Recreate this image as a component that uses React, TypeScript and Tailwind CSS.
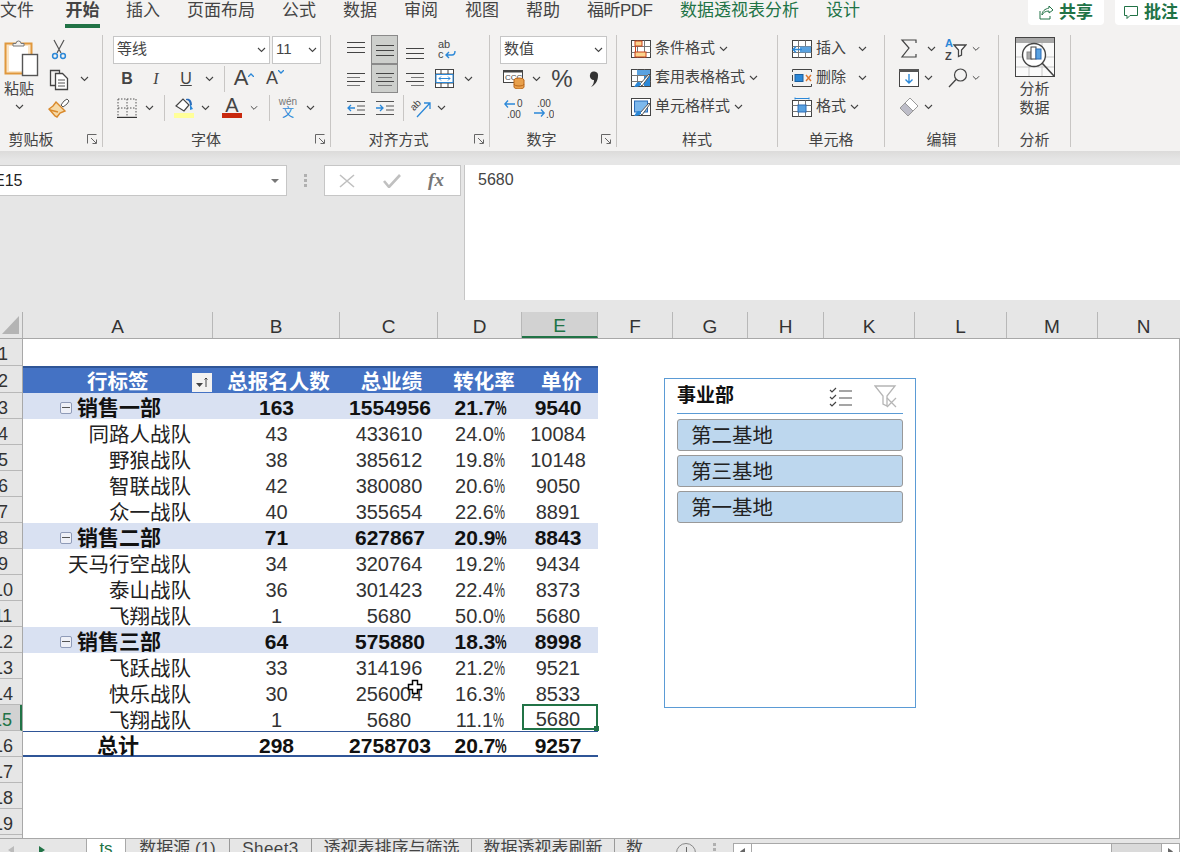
import React from "react";

const Chev = ({ c = "#444" }: { c?: string }) => (
  <svg width="9" height="6" viewBox="0 0 9 6"><path d="M1 1l3.5 3.5L8 1" stroke={c} strokeWidth="1.1" fill="none" /></svg>
);
const Slot = ({ className = "", children }: { className?: string; children?: React.ReactNode }) => (
  <div className={`flex h-full shrink-0 items-center justify-center ${className}`}>{children}</div>
);
const Row = ({ children, className = "" }: { children?: React.ReactNode; className?: string }) => (
  <div className={`flex h-[29px] items-center ${className}`}>{children}</div>
);
const VLine = () => <div className="h-[26px] w-px bg-[#c8c6c4]" />;
const Launcher = () => (
  <svg width="10" height="10" viewBox="0 0 10 10" className="mr-[5px] mt-[1px]">
    <path d="M.5 9.5v-9h9M4 4l5 5M5.5 9.5h4v-4" stroke="#666" fill="none" />
  </svg>
);
const Group = ({ className, label, labelClass = "", launcher, children }: { className: string; label: string; labelClass?: string; launcher?: boolean; children?: React.ReactNode }) => (
  <div className={`flex h-[112px] shrink-0 flex-col border-r border-[#c8c6c4] ${className}`}>
    <div className="h-[95px]">{children}</div>
    <div className="flex h-[17px] items-center">
      <div className={`flex-1 pt-[2px] text-center text-[15px] leading-[17px] text-[#444] ${labelClass}`}>{label}</div>
      {launcher && <Launcher />}
    </div>
  </div>
);

const Lines = ({ ys, c = "#444" }: { ys: number[]; c?: string }) => (
  <svg width="20" height="26" viewBox="0 0 20 26">
    {ys.map((y, i) => <path key={i} d={`M1 ${y + 0.5}H19`} stroke={c} strokeWidth="1" />)}
  </svg>
);
const AlignH = ({ t }: { t: "l" | "c" | "r" }) => {
  const d = t === "l" ? ["M1 7.5H19", "M1 11.5H14", "M1 15.5H19", "M1 19.5H14"] : t === "c" ? ["M1 7.5H19", "M3 11.5H17", "M1 15.5H19", "M3 19.5H17"] : ["M1 7.5H19", "M6 11.5H19", "M1 15.5H19", "M6 19.5H19"];
  return <svg width="20" height="26" viewBox="0 0 20 26">{d.map((p, i) => <path key={i} d={p} stroke={i % 2 ? "#777" : "#444"} />)}</svg>;
};

const Paste = () => (
  <svg width="36" height="38" viewBox="0 0 36 38">
    <rect x="1.5" y="4.5" width="26" height="30" fill="#fbe5c6" stroke="#e0983d" strokeWidth="2" />
    <rect x="5" y="7" width="19" height="25" fill="#fff" />
    <path d="M9 7V4.5h3a2.5 2.5 0 0 1 5 0h3V7z" fill="#f3f2f1" stroke="#777" />
    <rect x="18.5" y="15.5" width="15" height="21" fill="#fff" stroke="#555" strokeWidth="1.4" />
  </svg>
);
const Scissors = () => (
  <svg width="16" height="22" viewBox="0 0 16 22">
    <path d="M3 1l7 13M13 1L6 14" stroke="#555" strokeWidth="1.2" fill="none" />
    <circle cx="4" cy="17" r="2.4" fill="none" stroke="#2b88d8" strokeWidth="1.5" />
    <circle cx="12" cy="17" r="2.4" fill="none" stroke="#2b88d8" strokeWidth="1.5" />
  </svg>
);
const Copy = () => (
  <svg width="22" height="24" viewBox="0 0 22 24">
    <path d="M7.5 18.5h-5v-15h9v3" fill="none" stroke="#444" strokeWidth="1.3" />
    <path d="M7.5 6.5h7l5 5v11h-12z" fill="#fff" stroke="#444" strokeWidth="1.3" />
    <path d="M10 13h7M10 16h7M10 19h7" stroke="#555" />
  </svg>
);
const Painter = () => (
  <svg width="22" height="22" viewBox="0 0 22 22">
    <path d="M13 8l3-4 3-2 2 2-2 3-4 3z" fill="#fff" stroke="#555" />
    <path d="M8 5l9 9-5 2-3 4-2-1-6-7 4-3z" fill="#f6d9a6" stroke="#d9892b" strokeWidth="1.4" />
    <path d="M2 13l8 2" stroke="#d9892b" strokeWidth="1.6" />
  </svg>
);
const Borders = () => (
  <svg width="20" height="20" viewBox="0 0 20 20">
    <path d="M1 1h18v18M1 1v18M10 1v18M1 10h18" stroke="#555" strokeDasharray="1.5 1.5" fill="none" />
    <path d="M0 19.5h20" stroke="#333" strokeWidth="1.4" />
  </svg>
);
const Fill = () => (
  <div className="flex flex-col items-center">
    <svg width="20" height="15" viewBox="0 0 20 15">
      <path d="M2 8l7-7 6 6-5 6z" fill="#fff" stroke="#444" strokeWidth="1.2" />
      <path d="M12 2c3 0 4 3 4 6l2-1c0-4-2-7-6-6z" fill="#2b6cb8" />
      <path d="M16 6l3 5 -3 1z" fill="#2b88d8" />
    </svg>
    <div className="h-[5px] w-[20px] bg-[#ffff99]" />
  </div>
);
const FontA = () => (
  <div className="flex flex-col items-center">
    <div className="h-[15px] text-[20px] leading-[15px] text-[#444]">A</div>
    <div className="h-[5px] w-[20px] bg-[#c8290e]" />
  </div>
);
const Wrap = () => (
  <svg width="20" height="22" viewBox="0 0 20 22">
    <text x="1" y="9" fontSize="11" fill="#444" fontFamily="Liberation Sans">ab</text>
    <text x="1" y="19" fontSize="11" fill="#444" fontFamily="Liberation Sans">c</text>
    <path d="M18 12c0 3-1 4-3 4H9m3-3l-3 3 3 3" stroke="#2b88d8" strokeWidth="1.4" fill="none" />
  </svg>
);
const Merge = () => (
  <svg width="20" height="20" viewBox="0 0 20 20">
    <rect x=".5" y=".5" width="18" height="18" fill="#fff" stroke="#444" />
    <path d="M.5 5h18M.5 14h18M6 .5V5M13 .5V5M6 14v5M13 14v5" stroke="#444" />
    <rect x="1" y="5.5" width="17" height="8" fill="#fff" stroke="#2b88d8" />
    <path d="M4 9.5h11M6 7.5l-2 2 2 2M13 7.5l2 2-2 2" stroke="#2b88d8" fill="none" />
  </svg>
);
const IndentL = () => (
  <svg width="20" height="18" viewBox="0 0 20 18">
    <path d="M1 2.5h18M11 7h8M11 11h8M1 15.5h18" stroke="#555" />
    <path d="M9 9H2m3-3L2 9l3 3" stroke="#2b88d8" strokeWidth="1.3" fill="none" />
  </svg>
);
const IndentR = () => (
  <svg width="20" height="18" viewBox="0 0 20 18">
    <path d="M1 2.5h18M11 7h8M11 11h8M1 15.5h18" stroke="#555" />
    <path d="M1 9h7M5 6l3 3-3 3" stroke="#2b88d8" strokeWidth="1.3" fill="none" />
  </svg>
);
const Orient = () => (
  <svg width="22" height="22" viewBox="0 0 22 22">
    <text x="0" y="11" fontSize="10" fill="#444" fontFamily="Liberation Sans" transform="rotate(-45 6 8)">ab</text>
    <path d="M7 20L20 6M14 6h6v6" stroke="#2b88d8" strokeWidth="1.3" fill="none" />
  </svg>
);
const Account = () => (
  <svg width="22" height="20" viewBox="0 0 22 20">
    <rect x=".5" y="1.5" width="19" height="12" fill="#fff" stroke="#444" />
    <path d="M.5 2.5h19" stroke="#444" strokeWidth="2" />
    <text x="2" y="11" fontSize="8" fill="#444" fontFamily="Liberation Sans">CCC</text>
    <ellipse cx="16" cy="11" rx="5" ry="2" fill="#e8a04c" stroke="#b9661a" />
    <path d="M11 11v7c0 1 2 2 5 2s5-1 5-2v-7" fill="#e8a04c" stroke="#b9661a" />
    <path d="M11 15c0 1 2 2 5 2s5-1 5-2" fill="none" stroke="#b9661a" />
  </svg>
);
const DecInc = () => (
  <svg width="20" height="20" viewBox="0 0 20 20">
    <path d="M11 6H1m3-3.5L.8 6 4 9.5" stroke="#2b88d8" strokeWidth="1.3" fill="none" />
    <text x="13" y="9" fontSize="10" fill="#444" fontFamily="Liberation Sans">0</text>
    <text x="3" y="20" fontSize="10" fill="#444" fontFamily="Liberation Sans">.00</text>
  </svg>
);
const DecDec = () => (
  <svg width="20" height="20" viewBox="0 0 20 20">
    <text x="3" y="9" fontSize="10" fill="#444" fontFamily="Liberation Sans">.00</text>
    <path d="M0 15h10M7 11.5l3.2 3.5L7 18.5" stroke="#2b88d8" strokeWidth="1.3" fill="none" />
    <text x="12" y="20" fontSize="10" fill="#444" fontFamily="Liberation Sans">.0</text>
  </svg>
);
const GridBase = () => (
  <>
    <rect x=".5" y=".5" width="19" height="17" fill="#fff" stroke="#444" />
    <path d="M.5 6.5h19M.5 12.5h19M6.5.5v17M13.5.5v17" stroke="#777" />
  </>
);
const CondF = () => (
  <svg width="20" height="18" viewBox="0 0 20 18">
    <GridBase />
    <rect x="4" y="1" width="7" height="5" fill="#fbd38d" stroke="#c8401a" />
    <rect x="4" y="12" width="11" height="5" fill="#fbd38d" stroke="#c8401a" />
    <path d="M4.5 6v6" stroke="#c8401a" />
  </svg>
);
const Brush = () => (
  <>
    <path d="M9 15L18 5l1 1-8 11z" fill="#fff" stroke="#555" />
    <path d="M5 15c2-3 5-2 5 0s-3 3-7 3c1-1 1-2 2-3z" fill="#2b88d8" />
  </>
);
const TblF = () => (
  <svg width="20" height="18" viewBox="0 0 20 18">
    <GridBase />
    <rect x="6" y="1" width="13" height="5" fill="#5aa2e0" />
    <rect x="13" y="7" width="6" height="10" fill="#2b88d8" />
    <Brush />
  </svg>
);
const CellF = () => (
  <svg width="20" height="18" viewBox="0 0 20 18">
    <rect x=".5" y=".5" width="19" height="17" fill="#fff" stroke="#444" />
    <rect x="3.5" y="3" width="13" height="11" fill="#7db8ec" stroke="#2b6cb8" />
    <Brush />
  </svg>
);
const InsC = () => (
  <svg width="20" height="18" viewBox="0 0 20 18">
    <GridBase />
    <rect x="8" y="6.5" width="11" height="6" fill="#5aa2e0" />
    <path d="M10 9.5H1m3-3L1 9.5l3 3" stroke="#2b88d8" strokeWidth="1.4" fill="#fff" />
  </svg>
);
const DelC = () => (
  <svg width="20" height="18" viewBox="0 0 20 18">
    <path d="M.5 3V.5h19V3M.5 15v2.5h19V15M.5 6v6" stroke="#444" fill="none" />
    <rect x="3" y="5.5" width="8" height="7" fill="#2b88d8" stroke="#1c5f9e" />
    <path d="M14 6l5 6M19 6l-5 6" stroke="#e0782f" strokeWidth="1.4" />
  </svg>
);
const FmtC = () => (
  <svg width="20" height="20" viewBox="0 0 20 20">
    <path d="M3 1.5h14M3 .5v2M17 .5v2" stroke="#2b88d8" />
    <rect x=".5" y="3.5" width="19" height="16" fill="#fff" stroke="#444" />
    <path d="M.5 8.5h19M.5 14.5h19M6.5 3.5v16M13.5 3.5v16" stroke="#777" />
    <rect x="6" y="8" width="8" height="7" fill="#5aa2e0" stroke="#2b6cb8" />
  </svg>
);
const Sigma = () => (
  <svg width="18" height="19" viewBox="0 0 18 19"><path d="M16 4V1H2l7 8-7 9h14v-3" stroke="#444" strokeWidth="1.2" fill="none" /></svg>
);
const SortF = () => (
  <svg width="22" height="24" viewBox="0 0 22 24">
    <text x="0" y="10" fontSize="11" fontWeight="700" fill="#2b88d8" fontFamily="Liberation Sans">A</text>
    <text x="0" y="23" fontSize="11" fontWeight="700" fill="#444" fontFamily="Liberation Sans">Z</text>
    <path d="M9 8h12l-4.5 5v5l-3 1.5V13z" fill="#fff" stroke="#444" strokeWidth="1.3" />
  </svg>
);
const FillD = () => (
  <svg width="20" height="18" viewBox="0 0 20 18">
    <rect x=".5" y=".5" width="19" height="17" fill="#fff" stroke="#444" />
    <rect x="0" y="0" width="20" height="3" fill="#555" />
    <path d="M10 5v9M6.5 10.5L10 14l3.5-3.5" stroke="#2b88d8" strokeWidth="1.4" fill="none" />
  </svg>
);
const Find = () => (
  <svg width="20" height="20" viewBox="0 0 20 20">
    <circle cx="12.5" cy="7" r="6" fill="none" stroke="#444" strokeWidth="1.2" />
    <path d="M8 11.5L1 19" stroke="#444" strokeWidth="1.3" />
  </svg>
);
const Eraser = () => (
  <svg width="20" height="20" viewBox="0 0 20 20">
    <path d="M11 1l8 8-5 5-8-8z" fill="#fff" stroke="#999" />
    <path d="M6 6l8 8-5 5-8-8z" fill="#bdbdc8" stroke="#999" />
  </svg>
);
const Analyze = () => (
  <svg width="40" height="40" viewBox="0 0 40 40">
    <rect x=".5" y=".5" width="39" height="39" fill="#fafafa" stroke="#444" />
    <rect x="1" y="1" width="38" height="5" fill="#a8a8a8" />
    <path d="M1 20h38M1 30h38M14 6v33M27 6v33" stroke="#c8c8c8" />
    <circle cx="19" cy="18" r="11.5" fill="#fff" stroke="#444" strokeWidth="1.4" />
    <rect x="12" y="15" width="5" height="7" fill="#aaa" stroke="#888" />
    <rect x="16" y="10" width="5" height="12" fill="#fff" stroke="#444" />
    <rect x="21" y="12" width="5" height="10" fill="#5aa2e0" stroke="#2b6cb8" />
    <path d="M27 26l12 13" stroke="#444" strokeWidth="1.6" />
  </svg>
);

const tabs = ["公式", "数据", "审阅", "视图", "帮助"];

const Ribbon = () => (
  <div className="h-[151px] shrink-0 bg-[#f3f2f1]">
    <div className="flex h-[35px] items-start text-[17px] leading-[22px] text-[#444]">
      <div className="flex">
        <span className="w-[34px]">文件</span>
        <div className="ml-[31px] flex h-[28px] w-[35px] flex-col items-center justify-start border-b-4 border-[#217346] font-bold whitespace-nowrap">开始</div>
        <span className="ml-[26px]">插入</span>
        <span className="ml-[27px]">页面布局</span>
        <div className="ml-[27px] flex gap-[27px]">
          {tabs.map((t) => <span key={t} className="whitespace-nowrap">{t}</span>)}
          <span className="w-[66px] whitespace-nowrap tracking-[-0.5px]">福昕PDF</span>
        </div>
        <span className="ml-[27px] text-[#217346]">数据透视表分析</span>
        <span className="ml-[27px] text-[#217346]">设计</span>
      </div>
      <div className="-mr-[11px] ml-auto flex gap-[11px]">
        <div className="flex h-[25px] w-[76px] items-center justify-center gap-[5px] rounded-b-[4px] bg-white font-bold text-[#217346]">
          <svg width="15" height="15" viewBox="0 0 15 15"><path d="M10 1l4 4-4 3V6C6 6 4 8 3 10c0-4 3-6 7-7zM1 6v8h10v-3" fill="none" stroke="#217346" /></svg>
          <span>共享</span>
        </div>
        <div className="flex h-[25px] w-[76px] items-center justify-start gap-[5px] rounded-b-[4px] bg-white pl-[9px] font-bold text-[#217346]">
          <svg width="15" height="14" viewBox="0 0 15 14"><path d="M.5.5h13v9H6l-3 3v-3H.5z" fill="none" stroke="#217346" /></svg>
          <span className="whitespace-nowrap">批注</span>
        </div>
      </div>
    </div>
    <div className="flex">
      <Group className="w-[103px]" label="剪贴板" labelClass="pr-[25px]" launcher>
        <div className="flex">
          <div className="flex w-[38px] flex-col items-center">
            <div className="ml-[6px] pt-[4px]"><Paste /></div>
            <div className="mt-[3px] text-[15px] leading-[18px] text-[#444]">粘贴</div>
            <div className="mt-[6px]"><Chev /></div>
          </div>
          <div>
            <Row><Slot className="w-[42px]"><Scissors /></Slot></Row>
            <Row><Slot className="w-[42px]"><Copy /></Slot><Chev /></Row>
            <Row><Slot className="w-[42px]"><Painter /></Slot></Row>
          </div>
        </div>
      </Group>

      <Group className="w-[228px]" label="字体" labelClass="pr-[6px]" launcher>
        <div className="pl-[10px] text-[#444]">
          <Row className="gap-[2px]">
            <div className="flex h-[28px] w-[157px] items-center justify-between border border-[#c6c6c6] bg-white px-[3px] text-[15px]"><span>等线</span><Chev /></div>
            <div className="flex h-[28px] w-[49px] items-center justify-between border border-[#c6c6c6] bg-white px-[3px] text-[15px]"><span>11</span><Chev /></div>
          </Row>
          <Row>
            <Slot className="w-[28px] text-[16px] font-bold">B</Slot>
            <Slot className="w-[30px] font-['Liberation_Serif',serif] text-[16px] italic">I</Slot>
            <Slot className="w-[30px] text-[16px] underline">U</Slot>
            <Slot className="w-[16px]"><Chev /></Slot>
            <Slot className="w-[15px]"><VLine /></Slot>
            <Slot className="w-[24px] items-start"><span className="text-[22px] leading-[28px]">A</span><svg width="6" height="4" viewBox="0 0 6 4" className="mt-[9px]"><path d="M0 4l3-3 3 3" stroke="#2b88d8" fill="none" strokeWidth="1.3" /></svg></Slot>
            <Slot className="ml-[8px] w-[22px]"><span className="text-[18px]">A</span><svg width="6" height="4" viewBox="0 0 6 4" className="mb-[14px]"><path d="M0 0l3 3 3-3" stroke="#2b88d8" fill="none" strokeWidth="1.3" /></svg></Slot>
          </Row>
          <Row>
            <Slot className="w-[27px]"><Borders /></Slot>
            <Slot className="w-[18px]"><Chev /></Slot>
            <Slot className="w-[13px]"><VLine /></Slot>
            <Slot className="w-[25px]"><Fill /></Slot>
            <Slot className="w-[18px]"><Chev /></Slot>
            <Slot className="w-[36px]"><FontA /></Slot>
            <Slot className="w-[8px]"><Chev /></Slot>
            <Slot className="w-[22px]"><VLine /></Slot>
            <Slot className="w-[16px] flex-col"><span className="text-[10px] leading-[11px] whitespace-nowrap text-[#777]">wén</span><span className="text-[12px] leading-[13px] text-[#2b88d8]">文</span></Slot>
            <Slot className="w-[28px]"><Chev /></Slot>
          </Row>
        </div>
      </Group>

      <Group className="w-[159px]" label="对齐方式" labelClass="pr-[8px]" launcher>
        <div className="pl-[10px]">
          <Row>
            <Slot className="w-[30px]"><Lines ys={[5, 10, 15]} /></Slot>
            <Slot className="h-[28px] w-[27px] border border-[#8a8a8a] bg-[#cdcfcc]"><Lines ys={[8, 13, 18]} /></Slot>
            <Slot className="w-[33px]"><Lines ys={[11, 16, 21]} /></Slot>
            <Slot className="w-[32px]"><Wrap /></Slot>
          </Row>
          <Row>
            <Slot className="w-[30px]"><AlignH t="l" /></Slot>
            <Slot className="h-[28px] w-[27px] border border-[#8a8a8a] bg-[#cdcfcc]"><AlignH t="c" /></Slot>
            <Slot className="w-[33px]"><AlignH t="r" /></Slot>
            <Slot className="w-[28px]"><Merge /></Slot>
            <Slot className="w-[18px]"><Chev /></Slot>
          </Row>
          <Row>
            <Slot className="w-[30px]"><IndentL /></Slot>
            <Slot className="w-[27px]"><IndentR /></Slot>
            <Slot className="w-[11px]"><VLine /></Slot>
            <Slot className="w-[24px]"><Orient /></Slot>
            <Slot className="w-[16px]"><Chev /></Slot>
          </Row>
        </div>
      </Group>

      <Group className="w-[127px]" label="数字" labelClass="pr-[8px]" launcher>
        <div className="pl-[10px] text-[#444]">
          <Row>
            <div className="flex h-[28px] w-[107px] items-center justify-between border border-[#c6c6c6] bg-white px-[3px] text-[15px]"><span>数值</span><Chev /></div>
          </Row>
          <Row>
            <Slot className="w-[28px]"><Account /></Slot>
            <Slot className="w-[16px]"><Chev /></Slot>
            <Slot className="w-[36px] text-[24px]">%</Slot>
            <Slot className="w-[28px]"><svg width="10" height="18" viewBox="0 0 10 18"><path d="M1 5a4 4 0 1 1 8 1c0 5-3 9-7 11 2-2 3-4 3-7a4 4 0 0 1-4-5z" fill="#333" /></svg></Slot>
          </Row>
          <Row>
            <Slot className="w-[28px]"><DecInc /></Slot>
            <Slot className="w-[32px]"><DecDec /></Slot>
          </Row>
        </div>
      </Group>

      <Group className="w-[161px]" label="样式">
        <div className="pl-[13px] text-[15px] text-[#444]">
          <Row className="pb-[2px]"><Slot className="w-[22px]"><CondF /></Slot><span className="ml-[3px]">条件格式</span><span className="ml-[4px]"><Chev /></span></Row>
          <Row className="pb-[2px]"><Slot className="w-[22px]"><TblF /></Slot><span className="ml-[3px] whitespace-nowrap">套用表格格式</span><span className="ml-[4px]"><Chev /></span></Row>
          <Row className="pb-[2px]"><Slot className="w-[22px]"><CellF /></Slot><span className="ml-[3px] whitespace-nowrap">单元格样式</span><span className="ml-[4px]"><Chev /></span></Row>
        </div>
      </Group>

      <Group className="w-[107px]" label="单元格">
        <div className="pl-[13px] text-[15px] text-[#444]">
          <Row className="pb-[2px]"><Slot className="w-[22px]"><InsC /></Slot><span className="ml-[3px] w-[42px]">插入</span><Chev /></Row>
          <Row className="pb-[2px]"><Slot className="w-[22px]"><DelC /></Slot><span className="ml-[3px] w-[42px]">删除</span><Chev /></Row>
          <Row className="pb-[2px]"><Slot className="w-[22px]"><FmtC /></Slot><span className="ml-[3px]">格式</span><span className="ml-[4px]"><Chev /></span></Row>
        </div>
      </Group>

      <Group className="w-[114px]" label="编辑">
        <div className="pl-[10px]">
          <Row className="pb-[2px]"><Slot className="w-[28px]"><Sigma /></Slot><Slot className="w-[16px]"><Chev /></Slot><Slot className="w-[33px]"><SortF /></Slot><Slot className="w-[8px]"><Chev /></Slot></Row>
          <Row className="pb-[2px]"><Slot className="w-[28px]"><FillD /></Slot><Slot className="w-[10px]"><Chev /></Slot><Slot className="ml-[15px] w-[20px]"><Find /></Slot><Slot className="ml-[4px] w-[8px]"><Chev /></Slot></Row>
          <Row className="pb-[2px]"><Slot className="w-[28px]"><Eraser /></Slot><Slot className="w-[10px]"><Chev /></Slot></Row>
        </div>
      </Group>

      <Group className="w-[72px]" label="分析">
        <div className="flex flex-col items-center pt-[2px] text-[15px] leading-[19px] text-[#444]">
          <Analyze />
          <span className="mt-[2px]">分析</span>
          <span>数据</span>
        </div>
      </Group>
    </div>
  </div>
);

const FormulaBar = () => (
  <div className="flex h-[140px] shrink-0 items-start pt-[5px]">
    <div className="flex h-[31px] w-[287px] items-center justify-between border border-l-0 border-[#c6c6c6] bg-white pr-[7px]">
      <span className="-ml-[6px] text-[16px] text-[#222]">E15</span>
      <svg width="8" height="4" viewBox="0 0 8 4"><path d="M0 0h8L4 4z" fill="#777" /></svg>
    </div>
    <div className="flex h-[31px] w-[37px] items-center justify-center">
      <div className="flex flex-col gap-[2px]">
        <div className="h-[3px] w-[3px] bg-[#b0b0b0]" />
        <div className="h-[3px] w-[3px] bg-[#b0b0b0]" />
        <div className="h-[3px] w-[3px] bg-[#b0b0b0]" />
      </div>
    </div>
    <div className="flex h-[31px] w-[137px] items-center border border-[#c6c6c6] bg-white">
      <Slot className="w-[44px]"><svg width="16" height="14" viewBox="0 0 16 14"><path d="M1 1l14 12M15 1L1 13" stroke="#c0c0c0" strokeWidth="1.6" /></svg></Slot>
      <Slot className="w-[45px]"><svg width="18" height="14" viewBox="0 0 18 14"><path d="M1 7l5 6L17 1" stroke="#c0c0c0" strokeWidth="2.6" fill="none" /></svg></Slot>
      <Slot className="w-[44px] font-['Liberation_Serif',serif] text-[19px] font-bold text-[#777] italic">fx</Slot>
    </div>
    <div className="ml-[3px] h-[135px] flex-1 border-l border-[#c6c6c6] bg-white pl-[13px] pt-[5px] text-[16px] leading-[20px] text-[#444]">5680</div>
  </div>
);

const cols: [string, string, boolean?][] = [
  ["A", "w-[190px]"], ["B", "w-[127px]"], ["C", "w-[98px]"], ["D", "w-[84px]"], ["E", "w-[76px]", true],
  ["F", "w-[75px]"], ["G", "w-[75px]"], ["H", "w-[76px]"], ["K", "w-[91px]"], ["L", "w-[92px]"], ["M", "w-[91px]"], ["N", "w-[92px]"],
];
const ColHead = () => (
  <div className="flex h-[26px] shrink-0 overflow-hidden text-[19px] text-[#333]">
    <div className="flex w-[23px] shrink-0 items-end justify-start border-r border-[#b0b0b0] pb-[4px] pl-[2px]">
      <svg width="17" height="18" viewBox="0 0 17 18"><path d="M17 0v18H0z" fill="#b4b4b4" /></svg>
    </div>
    {cols.map(([n, w, sel]) => (
      <div key={n} className={`flex shrink-0 items-center justify-center border-r border-[#b8b8b8] pt-[4px] ${w} ${sel ? "border-b-2 border-b-[#217346] bg-[#d2d2d2] text-[#217346]" : ""}`}>{n}</div>
    ))}
  </div>
);

const RowHead = () => {
  const nums = Array.from({ length: 20 }, (_, i) => i + 1);
  return (
    <div className="w-[22px] shrink-0 overflow-hidden text-[18px] text-[#333]">
      {nums.map((n) => (
        <div key={n} className={`-ml-[16px] flex w-[38px] items-center justify-center border-b border-[#b8b8b8] pt-[5px] ${n <= 2 ? "h-[27px]" : "h-[26px]"} ${n === 15 ? "border-r-2 border-r-[#217346] bg-[#d2d2d2] text-[#217346]" : ""}`}>
          {n <= 19 ? n : ""}
        </div>
      ))}
    </div>
  );
};

type K = "dept" | "team" | "total";
const data: [string, string, string, string, string, K][] = [
  ["销售一部", "163", "1554956", "21.7", "9540", "dept"],
  ["同路人战队", "43", "433610", "24.0", "10084", "team"],
  ["野狼战队", "38", "385612", "19.8", "10148", "team"],
  ["智联战队", "42", "380080", "20.6", "9050", "team"],
  ["众一战队", "40", "355654", "22.6", "8891", "team"],
  ["销售二部", "71", "627867", "20.9", "8843", "dept"],
  ["天马行空战队", "34", "320764", "19.2", "9434", "team"],
  ["泰山战队", "36", "301423", "22.4", "8373", "team"],
  ["飞翔战队", "1", "5680", "50.0", "5680", "team"],
  ["销售三部", "64", "575880", "18.3", "8998", "dept"],
  ["飞跃战队", "33", "314196", "21.2", "9521", "team"],
  ["快乐战队", "30", "256004", "16.3", "8533", "team"],
  ["飞翔战队", "1", "5680", "11.1", "5680", "team"],
  ["总计", "298", "2758703", "20.7", "9257", "total"],
];
const gridCols = "grid w-[575px] grid-cols-[190px_127px_98px_84px_76px] text-center";

const Table = () => (
  <div className="text-[20px] text-[#111]">
    <div className="h-[27px]" />
    <div className={`${gridCols} h-[27px] items-center border-t-2 border-[#2f5597] bg-[#4472c4] text-[20.5px] font-bold leading-[26px] text-white [&>div]:pt-[1px]`}>
      <div className="flex items-center pl-[64px]">
        <span>行标签</span>
        <div className="ml-auto mr-px flex h-[19px] w-[20px] items-center justify-center bg-[#f3f2f1]">
          <svg width="14" height="13" viewBox="0 0 14 13"><path d="M1 7h7L4.5 11z" fill="#444" /><path d="M11 11V2M9.5 3.5L11 2l1.500 1.500" stroke="#444" fill="none" /></svg>
        </div>
      </div>
      <div className="pl-[4px] whitespace-nowrap">总报名人数</div>
      <div className="pl-[5px]">总业绩</div>
      <div className="pl-[8px]">转化率</div>
      <div className="pl-[3px]">单价</div>
    </div>
    {data.map((r, i) => {
      const k = r[5];
      const bold = k !== "team";
      const sel = i === 12;
      return (
        <div key={i} className={`${gridCols} h-[26px] items-start ${k === "dept" ? "bg-[#d9e1f2] leading-[29px]" : ""} ${bold ? "text-[21px] font-bold" : ""} ${k === "total" ? "border-y border-b-2 border-[#2f5597] leading-[28px]" : ""} ${k === "team" ? "leading-[31px]" : ""}`}>
          {k === "dept" ? (
            <div className="flex items-center pl-[37px]">
              <div className="flex h-[12px] w-[12px] items-center justify-center rounded-[2px] border border-[#8f9bb8] bg-[#eef0f7]"><div className="h-px w-[8px] bg-[#555]" /></div>
              <span className="ml-[5px]">{r[0]}</span>
            </div>
          ) : k === "team" ? (
            <div className="pr-[22px] text-right text-[20.5px] whitespace-nowrap text-[#222]">{r[0]}</div>
          ) : (
            <div>{r[0]}</div>
          )}
          <div className={bold ? "" : "text-[#333]"}>{r[1]}</div>
          <div className={bold ? "pl-[2px]" : "text-[#333]"}>{r[2]}</div>
          <div className={`whitespace-nowrap ${bold ? "pl-[1px]" : "text-[#333]"}`}>
            {r[3]}
            <span className="inline-block w-[11px] origin-left scale-x-[0.62] text-left">%</span>
          </div>
          <div className={`relative h-[26px] pr-[4px] ${bold ? "" : "text-[#333]"} ${sel ? "-mt-px border-2 border-[#217346] leading-[27px]" : ""}`}>
            {r[4]}
            {sel && <div className="absolute -bottom-[3px] -right-[3px] h-[5px] w-[5px] bg-[#217346]" />}
          </div>
        </div>
      );
    })}
  </div>
);

const Slicer = () => (
  <div className="absolute left-[664px] top-[378px] h-[330px] w-[252px] border border-[#5b9bd5] bg-white px-[12px]">
    <div className="flex h-[35px] items-center justify-between border-b border-[#5b9bd5] pt-[1px]">
      <span className="text-[19px] font-bold text-[#111]">事业部</span>
      <div className="flex items-center gap-[21px] pr-[5px]">
        <svg width="24" height="22" viewBox="0 0 24 22">
          <path d="M1 4l2 2 4-4M1 11l2 2 4-4M1 18l2 2 4-4" stroke="#444" strokeWidth="1.2" fill="none" />
          <path d="M10 5h13M10 12h13M10 19h13" stroke="#888" strokeWidth="1.3" />
        </svg>
        <svg width="24" height="24" viewBox="0 0 24 24">
          <path d="M1 1h20l-8 10v10l-4-2v-8z" fill="none" stroke="#b5b5b5" strokeWidth="1.3" />
          <path d="M13 13l9 9M22 13l-9 9" stroke="#b5b5b5" strokeWidth="1.3" />
        </svg>
      </div>
    </div>
    <div className="mt-[5px] flex flex-col gap-[4px]">
      {["第二基地", "第三基地", "第一基地"].map((t) => (
        <div key={t} className="flex h-[32px] items-center rounded-[3px] border border-[#999] bg-[#bdd7ee] pl-[13px] pt-[2px] text-[20.5px] text-[#222]">{t}</div>
      ))}
    </div>
  </div>
);

const sheets: [string, string][] = [
  ["数据源 (1)", "w-[104px]"],
  ["Sheet3", "w-[82px] tracking-[0.4px]"],
  ["透视表排序与筛选", "w-[160px]"],
  ["数据透视表刷新", "w-[143px]"],
];
const SheetTabs = () => (
  <div className="flex h-[14px] shrink-0 items-start overflow-hidden text-[17px] leading-[20px] text-[#444]">
    <div className="flex h-[14px] w-[86px] items-center gap-[19px] border-t border-[#a8a8a8] pl-[8px] pt-[8px]">
      <svg width="6" height="8" viewBox="0 0 6 8"><path d="M6 0v8L0 4z" fill="#bbb" /></svg>
      <svg width="6" height="8" viewBox="0 0 6 8" className="ml-[6px]"><path d="M0 0v8l6-4z" fill="#217346" /></svg>
    </div>
    <div className="flex h-[14px] w-[40px] justify-center border-x border-t border-[#a8a8a8] bg-white font-normal text-[#217346]">ts</div>
    <div className="flex h-[14px] w-[607px] items-start border-t border-[#a8a8a8]">
      {sheets.map(([s, w]) => (
        <div key={s} className={`h-[14px] border-r border-[#999] text-center whitespace-nowrap ${w}`}>{s}</div>
      ))}
      <div className="pl-[11px]">数</div>
      <div className="ml-auto flex items-start gap-[17px] pr-[17px] pt-[4px]">
        <div className="flex h-[20px] w-[20px] shrink-0 justify-center rounded-full border border-[#888] pt-[3px]"><div className="h-[10px] w-px bg-[#666]" /></div>
        <div className="flex flex-col gap-[2px]"><div className="h-[3px] w-[3px] bg-[#b0b0b0]" /><div className="h-[3px] w-[3px] bg-[#b0b0b0]" /></div>
      </div>
    </div>
    <div className="h-[14px] flex-1 border-t border-[#a8a8a8] pt-[4px]">
      <div className="flex h-[14px] border border-[#a8a8a8]">
        <div className="flex w-[18px] items-start justify-center border-r border-[#a8a8a8] bg-white pt-[4px]"><svg width="5" height="7" viewBox="0 0 5 7"><path d="M5 0v7L0 3.5z" fill="#666" /></svg></div>
        <div className="w-[360px] border-r border-[#a8a8a8] bg-white" />
        <div className="w-[49px] bg-[#dadada]" />
        <div className="flex flex-1 items-start justify-center border-l border-[#a8a8a8] bg-white pt-[4px]"><svg width="5" height="7" viewBox="0 0 5 7"><path d="M0 0v7l5-3.5z" fill="#666" /></svg></div>
      </div>
    </div>
  </div>
);

export default function App() {
  return (
    <div className="relative flex h-[852px] w-[1180px] flex-col overflow-hidden bg-[#e6e6e6] font-['Liberation_Sans','Noto_Sans_CJK_SC',sans-serif]">
      <Ribbon />
      <div className="h-[9px] shrink-0 bg-gradient-to-b from-[#dcdbda] to-[#e6e6e6]" />
      <FormulaBar />
      <div className="h-[12px] shrink-0" />
      <ColHead />
      <div className="flex h-[500px] shrink-0 border-t border-[#a8a8a8]">
        <RowHead />
        <div className="flex-1 overflow-hidden border-x border-[#a8a8a8] bg-white">
          <Table />
        </div>
      </div>
      <SheetTabs />
      <Slicer />
      <svg width="16" height="16" viewBox="0 0 16 16" className="absolute left-[407px] top-[679px]">
        <path d="M5.5 1.5h5v4h4v5h-4v4h-5v-4h-4v-5h4z" fill="#fff" stroke="#000" strokeWidth="1.5" />
      </svg>
    </div>
  );
}
